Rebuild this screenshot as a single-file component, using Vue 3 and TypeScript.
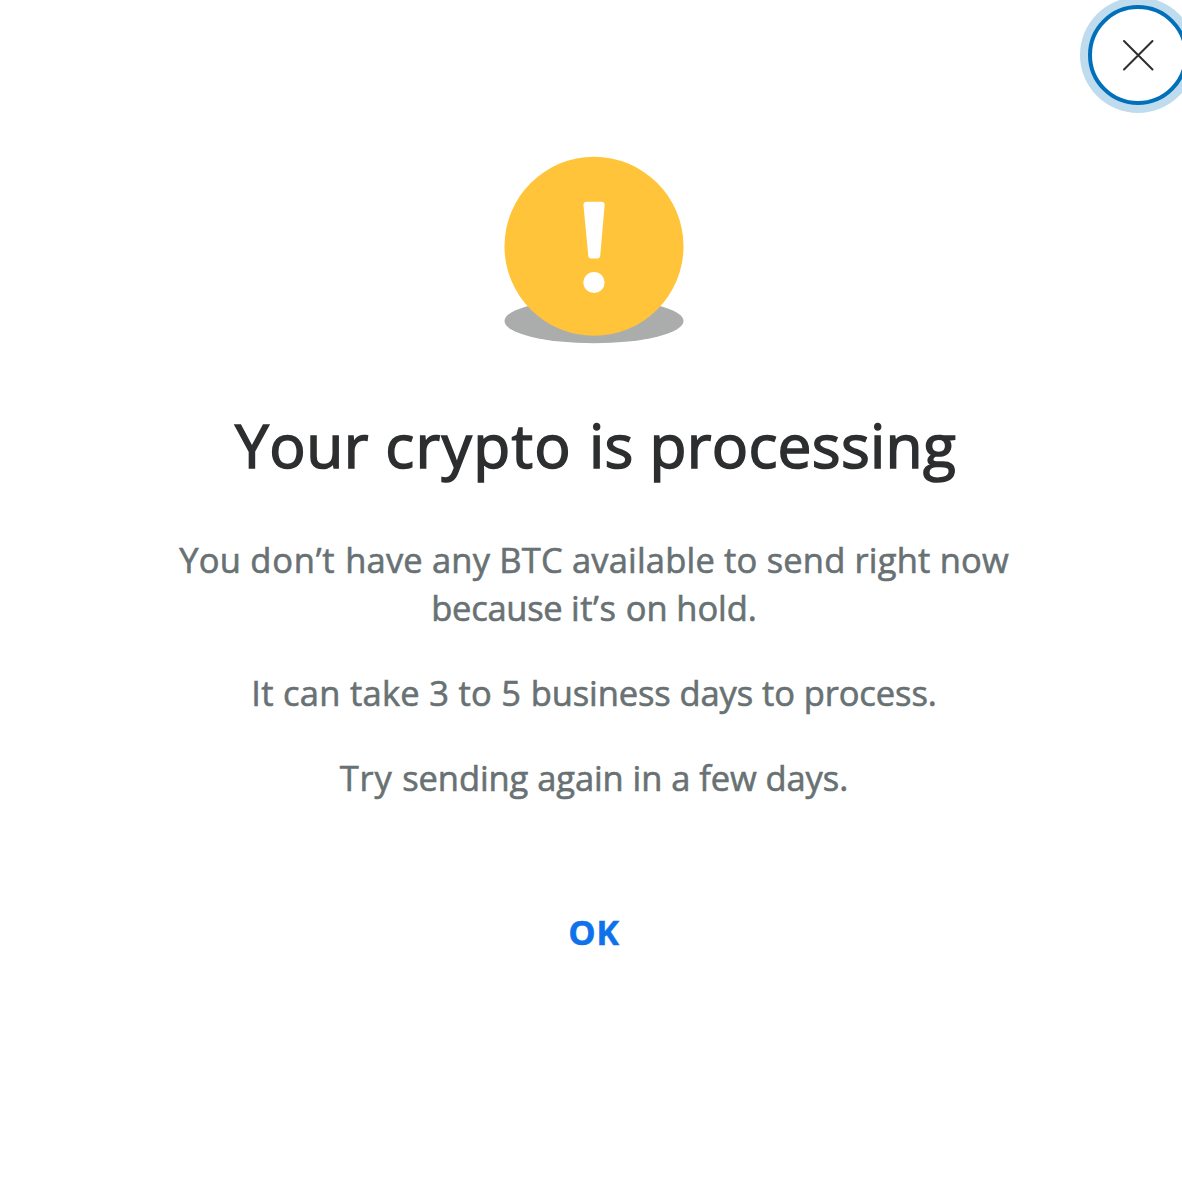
<script setup lang="ts">
interface Run {
  text: string
  spacing: number
}

const title: Run[] = [
  { text: 'Your ', spacing: 0.5 },
  { text: 'crypto ', spacing: 1.3 },
  { text: 'is ', spacing: 0.2 },
  { text: 'processing', spacing: 0.25 },
]

const paragraphs: Run[][][] = [
  [
    [
      { text: 'You ', spacing: 0.23 },
      { text: 'don’t ', spacing: 0.8 },
      { text: 'have any BTC available to send right now', spacing: 0.18 },
    ],
    [
      { text: 'because ', spacing: -0.3 },
      { text: 'it’s ', spacing: 0.5 },
      { text: 'on hold.', spacing: -0.1 },
    ],
  ],
  [
    [
      { text: 'It can take 3 to 5 ', spacing: 0.28 },
      { text: 'business days to process.', spacing: -0.1 },
    ],
  ],
  [
    [
      { text: 'Try ', spacing: 0.75 },
      { text: 'sending again in a few days.', spacing: -0.08 },
    ],
  ],
]
</script>

<template>
  <main class="page">
    <section class="dialog">
      <header class="bar">
        <button class="close" type="button" aria-label="Close">
          <svg width="32" height="32" viewBox="0 0 32 32" fill="none">
            <path d="M2 2L30.500 30.500M30.500 2L2 30.500" stroke="#2c2e2f" stroke-width="2" stroke-linecap="round" />
          </svg>
        </button>
      </header>

      <svg class="alert" width="180" height="188" viewBox="0 0 180 188">
        <ellipse cx="90" cy="165" rx="89.500" ry="22.300" fill="#abadad" />
        <circle cx="90" cy="90.300" r="89.500" fill="#ffc43a" />
        <path
          d="M83 45.700H97.200Q100.900 45.700 100.600 49.400L96.200 100Q96 102.400 93.700 102.400H86.700Q84.500 102.400 84.300 100L79.500 49.400Q79.200 45.700 83 45.700Z"
          fill="#fff"
        />
        <circle cx="90" cy="126.500" r="10.600" fill="#fff" />
      </svg>

      <h1 class="title">
        <span
          v-for="run in title"
          :key="run.text"
          :style="{ letterSpacing: run.spacing + 'px' }"
        >{{ run.text }}</span>
      </h1>

      <div class="copy">
        <p v-for="(lines, i) in paragraphs" :key="i">
          <span v-for="(line, j) in lines" :key="j" class="line">
            <span
              v-for="run in line"
              :key="run.text"
              :style="{ letterSpacing: run.spacing + 'px' }"
            >{{ run.text }}</span>
          </span>
        </p>
      </div>

      <button class="ok" type="button">OK</button>
    </section>
  </main>
</template>

<style>
body {
  margin: 0;
  background: #fff;
}
</style>

<style scoped>
.page {
  width: 100%;
  height: 1198px;
  overflow: hidden;
  background: #fff;
  font-family: 'Open Sans', 'Noto Sans', sans-serif;
}

.dialog {
  display: flex;
  flex-direction: column;
  align-items: center;
  width: 1188px;
}

.bar {
  display: flex;
  justify-content: flex-end;
  width: 100%;
  height: 151px;
  padding-top: 5px;
}

.close {
  display: flex;
  align-items: center;
  justify-content: center;
  box-sizing: border-box;
  width: 100px;
  height: 100px;
  padding: 0;
  border: 4px solid #0070ba;
  border-radius: 50%;
  background: #fff;
  box-shadow: 0 0 0 8px #bfdcee;
}

.alert {
  display: block;
}

.title {
  height: 80px;
  margin: 61px 0 0;
  padding-left: 3px;
  color: #2c2e2f;
  font-size: 60.5px;
  font-weight: 400;
  line-height: 80px;
  white-space: nowrap;
  -webkit-text-stroke: 1.5px #2c2e2f;
}

.copy {
  margin-top: 51px;
  color: #687173;
  font-size: 34.5px;
  font-weight: 400;
  line-height: 48px;
  text-align: center;
  -webkit-text-stroke: 0.6px #687173;
}

.copy p {
  margin: 0 0 37px;
}

.line {
  display: block;
  white-space: nowrap;
}

.ok {
  height: 48px;
  margin-top: 69px;
  padding: 0;
  border: 0;
  background: none;
  color: #1072eb;
  font-family: inherit;
  font-size: 34.5px;
  font-weight: 700;
  line-height: 48px;
  letter-spacing: 0.6px;
  -webkit-text-stroke: 0.4px #1072eb;
}
</style>
